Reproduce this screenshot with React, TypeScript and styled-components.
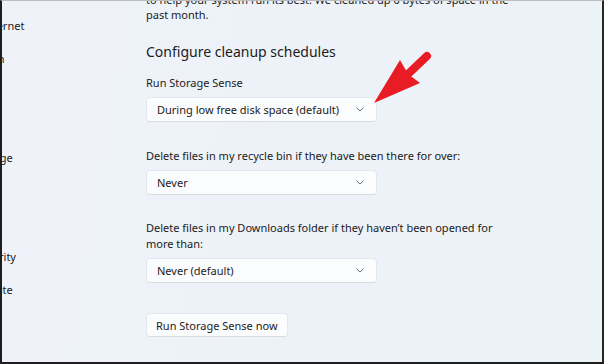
import React from "react";
import styled, { createGlobalStyle } from "styled-components";

const GlobalStyle = createGlobalStyle`
  html, body {
    margin: 0;
    padding: 0;
    background: #ffffff;
  }
  body {
    font-family: "Noto Sans", "Open Sans", Arial, sans-serif;
    color: #1b1b1b;
  }
`;

const Frame = styled.div`
  position: relative;
  width: 604px;
  height: 364px;
  box-sizing: border-box;
  display: flex;
  overflow: hidden;
  border-top: 1px solid #b9bdc2;
  border-left: 2px solid #1d1d1d;
  border-right: 2px solid #262626;
  border-bottom: 2px solid #1f1f1f;
  background: linear-gradient(100deg, #eff3f9 0%, #edf2f8 55%, #ebf3f7 100%);
`;

const Sidebar = styled.nav`
  flex: 0 0 144px;
  overflow: hidden;
`;

const NavList = styled.ul`
  list-style: none;
  margin: 8px 0 0 -77px;
  padding: 0;
  display: flex;
  flex-direction: column;
`;

const NavItem = styled.li`
  height: 33px;
  display: flex;
  align-items: center;
  font-size: 11px;
  white-space: nowrap;
  color: #1b1b1b;
`;

const Main = styled.main`
  flex: 1;
  display: flex;
  flex-direction: column;
  margin-top: -9px;
`;

const Paragraph = styled.p`
  margin: 0;
  font-size: 11px;
  line-height: 15px;
  white-space: nowrap;
`;

const Heading = styled.h2`
  margin: 19px 0 0;
  font-size: 14px;
  font-weight: 400;
  line-height: 22px;
`;

const Field = styled.div<{ $gap: number }>`
  display: flex;
  flex-direction: column;
  margin-top: ${(p) => p.$gap}px;
`;

const Label = styled.div`
  font-size: 11px;
  line-height: 16px;
  white-space: nowrap;
`;

const Select = styled.div`
  margin-top: 6px;
  width: 231px;
  height: 25px;
  box-sizing: border-box;
  display: flex;
  align-items: center;
  justify-content: space-between;
  padding: 0 12px 0 10px;
  background: #fbfcfd;
  border: 1px solid #e4e7eb;
  border-bottom-color: #d8dbdf;
  border-radius: 4px;
  font-size: 11px;
  white-space: nowrap;
`;

const Chevron = () => (
  <svg width="8" height="5" viewBox="0 0 8 5">
    <path d="M0.6 0.8 L4 4 L7.4 0.8" fill="none" stroke="#6a6d70" strokeWidth="1" />
  </svg>
);

const Button = styled.button`
  margin-top: 30px;
  align-self: flex-start;
  height: 24px;
  padding: 0 9px;
  background: #fbfcfd;
  border: 1px solid #e4e7eb;
  border-bottom-color: #d8dbdf;
  border-radius: 4px;
  font-family: inherit;
  font-size: 11px;
  color: #1b1b1b;
`;

const Annotation = styled.svg`
  position: absolute;
  left: 358px;
  top: 44px;
`;

const navItems = [
  "Network & internet",
  "Personalization",
  "Apps",
  "Accounts",
  "Time & language",
  "Gaming",
  "Accessibility",
  "Privacy & security",
  "Windows Update",
];

export default function App() {
  return (
    <>
      <GlobalStyle />
      <Frame>
        <Sidebar>
          <NavList>
            {navItems.map((n) => (
              <NavItem key={n}>{n}</NavItem>
            ))}
          </NavList>
        </Sidebar>
        <Main>
          <Paragraph>
            to help your system run its best. We cleaned up 0 bytes of space in the
            <br />
            past month.
          </Paragraph>
          <Heading>Configure cleanup schedules</Heading>
          <Field $gap={12}>
            <Label>Run Storage Sense</Label>
            <Select>
              During low free disk space (default)
              <Chevron />
            </Select>
          </Field>
          <Field $gap={26}>
            <Label>Delete files in my recycle bin if they have been there for over:</Label>
            <Select>
              Never
              <Chevron />
            </Select>
          </Field>
          <Field $gap={25}>
            <Label>
              Delete files in my Downloads folder if they haven’t been opened for
              <br />
              more than:
            </Label>
            <Select>
              Never (default)
              <Chevron />
            </Select>
          </Field>
          <Button>Run Storage Sense now</Button>
        </Main>
        <Annotation width="76" height="66" viewBox="0 0 76 66">
          <line x1="47" y1="30" x2="67" y2="11" stroke="#e81c24" strokeWidth="8" strokeLinecap="round" />
          <polygon points="14,58 40,15 48,29 60,38" fill="#e81c24" />
        </Annotation>
      </Frame>
    </>
  );
}
